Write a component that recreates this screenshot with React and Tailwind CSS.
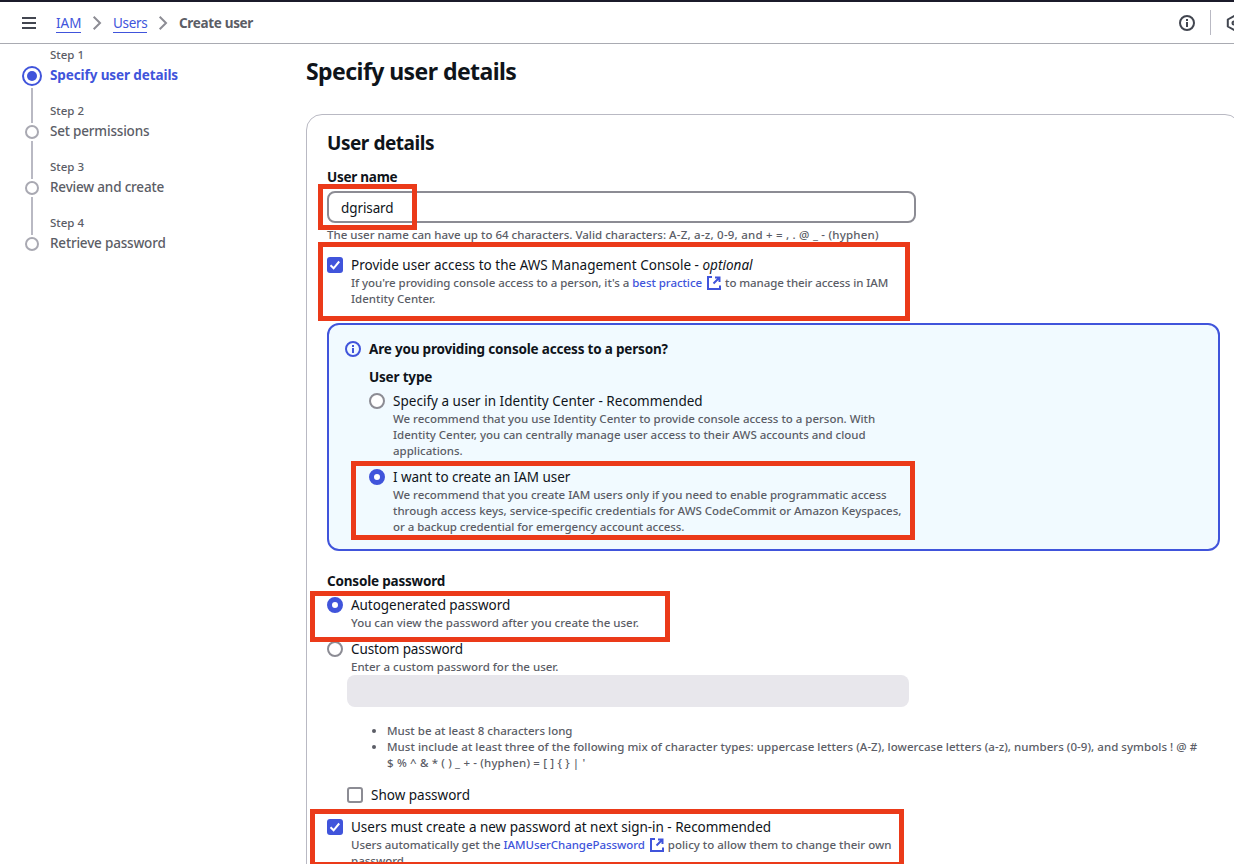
const BLUE = "#4054db";

function Hamburger() {
  return (
    <svg className="block h-4 w-4 shrink-0" viewBox="0 0 16 16" fill="none" stroke="#424650" strokeWidth="2">
      <path d="M1 3h14M1 8h14M1 13h14" />
    </svg>
  );
}

function Chevron() {
  return (
    <svg className="block h-4 w-4 shrink-0" viewBox="0 0 16 16" fill="none" stroke="#8c8c94" strokeWidth="2">
      <path d="M4.7 1.8 11 8l-6.3 6.2" />
    </svg>
  );
}

function Info({ color }) {
  return (
    <svg className="block h-4 w-4 shrink-0" viewBox="0 0 16 16" fill="none" stroke={color} strokeWidth="2">
      <circle cx="8" cy="8" r="7" />
      <path d="M8 4v2M8 7v5" />
    </svg>
  );
}

function Hexagon() {
  return (
    <svg className="block h-4 w-4 shrink-0" viewBox="0 0 16 16" fill="none" stroke="#424650" strokeWidth="2">
      <path d="M8 1 14.2 4.5v7L8 15 1.8 11.5v-7L8 1z" strokeLinejoin="round" />
      <circle cx="8" cy="8" r="1.5" />
    </svg>
  );
}

function External() {
  return (
    <svg className="mr-[3px] ml-1 -mt-0.5 inline-block h-4 w-4 shrink-0 align-middle" viewBox="0 0 16 16" fill="none" stroke={BLUE} strokeWidth="2">
      <path d="M14 10.5V14H2V2h4M9 2.5h4.5V7M13 3 7.5 8.5" />
    </svg>
  );
}

function Checkbox({ checked }) {
  if (!checked) return <span className="mt-0.5 block h-4 w-4 shrink-0 rounded-[3px] border-2 border-[#8c8c94] bg-white" />;
  return (
    <span className="mt-0.5 block h-4 w-4 shrink-0 rounded-[3px] bg-[#4054db]">
      <svg className="block h-4 w-4" viewBox="0 0 16 16" fill="none" stroke="#fff" strokeWidth="2">
        <path d="M3.5 8.3 6.6 11.3 12.2 4.5" />
      </svg>
    </span>
  );
}

function Radio({ checked }) {
  return checked ? (
    <span className="mt-0.5 block h-4 w-4 shrink-0 rounded-full border-5 border-[#4054db] bg-white" />
  ) : (
    <span className="mt-0.5 block h-4 w-4 shrink-0 rounded-full border-2 border-[#8c8c94] bg-white" />
  );
}

function Option({ control, label, labelClass = "", children }) {
  return (
    <div className="flex gap-2">
      {control}
      <div className="whitespace-nowrap">
        <div className="h-5 text-[13.5px] leading-5 text-[#0f141a]">
          <span className={labelClass}>{label}</span>
        </div>
        {children && <div className="text-[11.5px] leading-4 font-medium text-[#5b5d66]">{children}</div>}
      </div>
    </div>
  );
}

function Line({ className = "", children }) {
  return (
    <div className="h-4">
      <span className={className}>{children}</span>
    </div>
  );
}

const steps = [
  ["Step 1", "Specify user details"],
  ["Step 2", "Set permissions"],
  ["Step 3", "Review and create"],
  ["Step 4", "Retrieve password"],
];

function Steps() {
  return (
    <nav className="w-[306px] shrink-0 pt-[3px] pl-[22px]">
      {steps.map(([step, title], i) => (
        <div key={step} className="flex h-14 gap-2 whitespace-nowrap">
          <div className="flex w-5 shrink-0 flex-col items-center">
            {i === 0 ? (
              <>
                <span className="mt-[19px] flex h-5 w-5 shrink-0 items-center justify-center rounded-full border-2 border-[#4054db]">
                  <span className="h-2.5 w-2.5 rounded-full bg-[#4054db]" />
                </span>
                <span className="mt-0.5 h-[35px] w-0.5 shrink-0 bg-[#b9b9c3]" />
              </>
            ) : (
              <>
                <span className="mt-[22px] h-3.5 w-3.5 shrink-0 rounded-full border-2 border-[#a9a9b2]" />
                {i < 3 && <span className="mt-0.5 h-[38px] w-0.5 shrink-0 bg-[#b9b9c3]" />}
              </>
            )}
          </div>
          <div>
            <div className="h-4 text-[11.5px] leading-4 font-medium text-[#5b5d66]">{step}</div>
            <div
              className={
                i === 0
                  ? "mt-0.5 h-5 text-[13.5px] leading-5 font-bold tracking-[-0.1px] text-[#4054db]"
                  : "mt-0.5 h-5 text-[13.5px] leading-5 font-medium tracking-[-0.19px] text-[#5b5d66]"
              }
            >
              {title}
            </div>
          </div>
        </div>
      ))}
    </nav>
  );
}

function Header() {
  return (
    <header className="flex h-[44px] w-[1256px] shrink-0 items-center border-t-2 border-b border-t-[#1b1b2a] border-b-[#a9abb2] pl-[21px] text-[13.5px] leading-5 whitespace-nowrap">
      <Hamburger />
      <a className="ml-[19px] w-[25px] border-b border-[#4054db] pt-px leading-[18px] text-[#4054db]">IAM</a>
      <div className="ml-2"><Chevron /></div>
      <a className="ml-2 w-[34px] border-b border-[#4054db] pt-px leading-[18px] tracking-[-0.3px] text-[#4054db]">Users</a>
      <div className="ml-2"><Chevron /></div>
      <span className="ml-2 font-bold tracking-[-0.33px] text-[#5b5d66]">Create user</span>
      <div className="ml-auto flex items-center pr-[14px]">
        <Info color="#424650" />
        <span className="mx-[15px] h-[25px] w-px bg-[#b9b9c3]" />
        <Hexagon />
      </div>
    </header>
  );
}

function Annotations() {
  return (
    <>
      <div className="absolute top-[184px] left-[318px] h-[46px] w-[99px] border-5 border-[#eb3a19]" />
      <div className="absolute top-[242px] left-[318px] h-[79px] w-[592px] border-5 border-[#eb3a19]" />
      <div className="absolute top-[461px] left-[351px] h-[79px] w-[564px] border-5 border-[#eb3a19]" />
      <div className="absolute top-[591px] left-[310px] h-[51px] w-[360px] border-5 border-[#eb3a19]" />
      <div className="absolute top-[809px] left-[310px] h-[58px] w-[594px] border-5 border-[#eb3a19]" />
    </>
  );
}

export default function App() {
  return (
    <div className="relative flex h-[864px] w-[1234px] flex-col overflow-hidden bg-white font-['Noto_Sans',sans-serif]">
      <Header />
      <div className="flex">
        <Steps />
        <main className="w-[935px] shrink-0">
          <h1 className="mt-3 h-[30px] text-[23px] leading-[30px] font-bold tracking-[-0.56px] whitespace-nowrap text-[#0f141a]">
            <span>Specify user details</span>
          </h1>
          <section className="mt-7 h-[800px] rounded-2xl border border-[#b9b9c3] px-5 pt-4">
            <h2 className="h-6 text-[19px] leading-6 font-bold tracking-[-0.46px] text-[#0f141a]">User details</h2>
            <div className="mt-3 h-5 text-[13.5px] leading-5 font-bold tracking-[-0.25px] text-[#0f141a]">User name</div>
            <div className="mt-1 flex h-8 w-[589px] items-center rounded-lg border-2 border-[#8c8c94] px-3 pt-0.5 text-[13.5px] tracking-[-0.1px] text-[#0f141a]">dgrisard</div>
            <div className="mt-1 h-4 text-[11.5px] leading-4 font-medium whitespace-nowrap text-[#5b5d66]">
              The user name can have up to 64 characters. Valid characters:{" "}
              <span className="tracking-[0.22px]">A-Z, a-z, 0-9, and + = , . @ _ - (hyphen)</span>
            </div>
            <div className="mt-3">
              <Option
                control={<Checkbox checked />}
                labelClass="tracking-[0.02px]"
                label={<>Provide user access to the AWS Management Console - <i>optional</i></>}
              >
                <Line className="tracking-[-0.05px]">
                  If you're providing console access to a person, it's a <a className="text-[#4054db]">best practice</a>
                  <External />
                  <span className="tracking-[-0.09px]">to manage their access in IAM</span>
                </Line>
                <Line>Identity Center.</Line>
              </Option>
            </div>
            <div className="mt-4 flex h-[228px] gap-2 rounded-xl border-2 border-[#4054db] bg-[#f1faff] px-4 pt-3.5">
              <div className="mt-0.5"><Info color={BLUE} /></div>
              <div>
                <div className="h-5 text-[13.5px] leading-5 font-bold tracking-[-0.19px] whitespace-nowrap text-[#0f141a]">Are you providing console access to a person?</div>
                <div className="mt-2 mb-1 h-5 text-[13.5px] leading-5 font-bold tracking-[-0.18px] text-[#0f141a]">User type</div>
                <Option control={<Radio />} labelClass="tracking-[0.02px]" label="Specify a user in Identity Center - Recommended">
                  <Line className="tracking-[-0.02px]">We recommend that you use Identity Center to provide console access to a person. With</Line>
                  <Line className="tracking-[-0.02px]">Identity Center, you can centrally manage user access to their AWS accounts and cloud</Line>
                  <Line>applications.</Line>
                </Option>
                <div className="h-2" />
                <Option control={<Radio checked />} labelClass="tracking-[-0.06px]" label="I want to create an IAM user">
                  <Line className="tracking-[-0.035px]">We recommend that you create IAM users only if you need to enable programmatic access</Line>
                  <Line className="tracking-[-0.02px]">through access keys, service-specific credentials for AWS CodeCommit or Amazon Keyspaces,</Line>
                  <Line className="tracking-[-0.06px]">or a backup credential for emergency account access.</Line>
                </Option>
              </div>
            </div>
            <div className="mt-5 mb-1 h-5 text-[13.5px] leading-5 font-bold tracking-[-0.19px] text-[#0f141a]">Console password</div>
            <Option control={<Radio checked />} labelClass="tracking-[-0.05px]" label="Autogenerated password">
              <Line>You can view the password after you create the user.</Line>
            </Option>
            <div className="h-2" />
            <Option control={<Radio />} labelClass="tracking-[-0.12px]" label="Custom password">
              <Line>Enter a custom password for the user.</Line>
            </Option>
            <div className="ml-5 h-8 w-[562px] rounded-lg bg-[#e8e7ec]" />
            <ul className="mt-4 list-disc pl-[60px] text-[11.5px] leading-4 font-medium whitespace-nowrap text-[#5b5d66]">
              <li><span>Must be at least 8 characters long</span></li>
              <li>
                <span className="tracking-[0.04px]">Must include at least three of the following mix of character types: uppercase letters (A-Z), lowercase letters (a-z), numbers (0-9), and symbols ! @ #</span>
                <br />
                <span className="tracking-[0.16px]">$ % ^ &amp; * ( ) _ + - (hyphen) = [ ] {"{ }"} | '</span>
              </li>
            </ul>
            <div className="mt-3.5 mb-3 ml-5">
              <Option control={<Checkbox />} label="Show password" />
            </div>
            <Option control={<Checkbox checked />} labelClass="tracking-[-0.02px]" label="Users must create a new password at next sign-in - Recommended">
              <Line>
                <span className="tracking-[-0.06px]">
                  Users automatically get the <a className="text-[#4054db]">IAMUserChangePassword</a>
                </span>
                <External />
                policy to allow them to change their own
              </Line>
              <Line>password.</Line>
            </Option>
          </section>
        </main>
      </div>
      <Annotations />
    </div>
  );
}
